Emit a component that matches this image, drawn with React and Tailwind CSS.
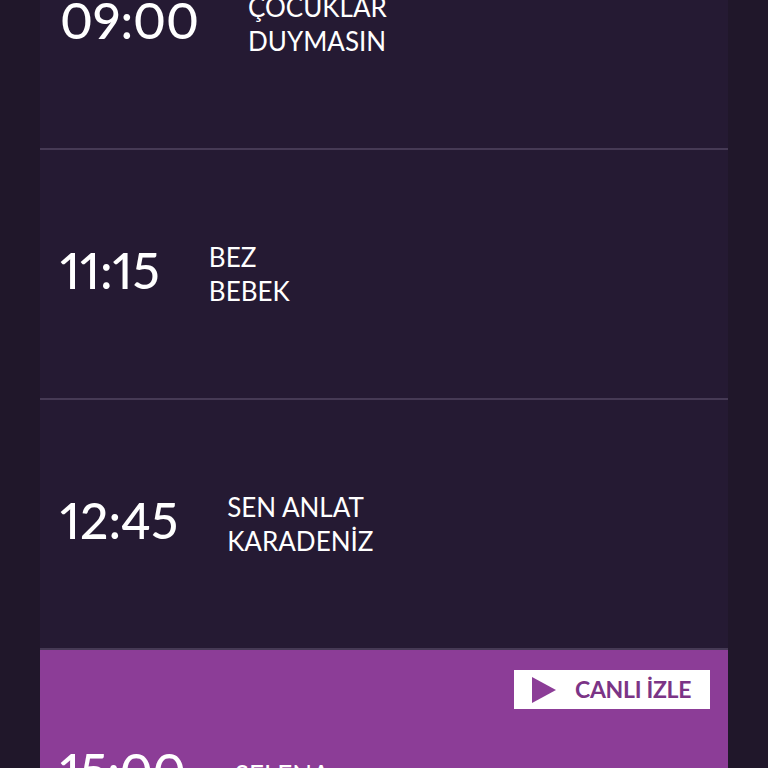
import React from "react";

const rows = [
  { time: "09:00", title: ["ÇOCUKLAR", "DUYMASIN"] },
  { time: "11:15", title: ["BEZ", "BEBEK"] },
  { time: "12:45", title: ["SEN ANLAT", "KARADENİZ"] },
];

const PlayIcon = () => (
  <svg width="26" height="28" viewBox="0 0 26 28" className="shrink-0">
    <path d="M1 1 L25 14 L1 27 Z" fill="#8c3d97" />
  </svg>
);

const Row = ({ time, title, live }) => (
  <div
    className={
      live
        ? "relative h-[250px] flex items-center pl-5 bg-[#8c3d97]"
        : "h-[250px] flex items-center pl-5 border-b-2 border-[#463a55]"
    }
  >
    {live && (
      <button
        type="button"
        className="absolute top-5 right-[18px] w-[196px] h-[39px] bg-white flex items-center pl-[17px] gap-[18px]"
      >
        <PlayIcon />
        <span className="text-[23px] font-bold text-[#7b3486] tracking-[-0.3px] leading-none">
          CANLI İZLE
        </span>
      </button>
    )}
    <span className="text-[50px] font-medium leading-none text-white proportional-nums -mt-2">
      {time}
    </span>
    <div className="ml-[49px] text-[26px] leading-[34px] text-white">
      {title.map((t) => (
        <div key={t}>{t}</div>
      ))}
    </div>
  </div>
);

export default function App() {
  return (
    <div
      className="w-[768px] h-[768px] overflow-hidden bg-[#20172a] px-10"
      style={{ fontFamily: "Lato, 'Noto Sans', sans-serif" }}
    >
      <div className="bg-[#251a33] -mt-[100px]">
        {rows.map((r) => (
          <Row key={r.time} {...r} />
        ))}
        <Row time="15:00" title={["SELENA", ""]} live />
      </div>
    </div>
  );
}
